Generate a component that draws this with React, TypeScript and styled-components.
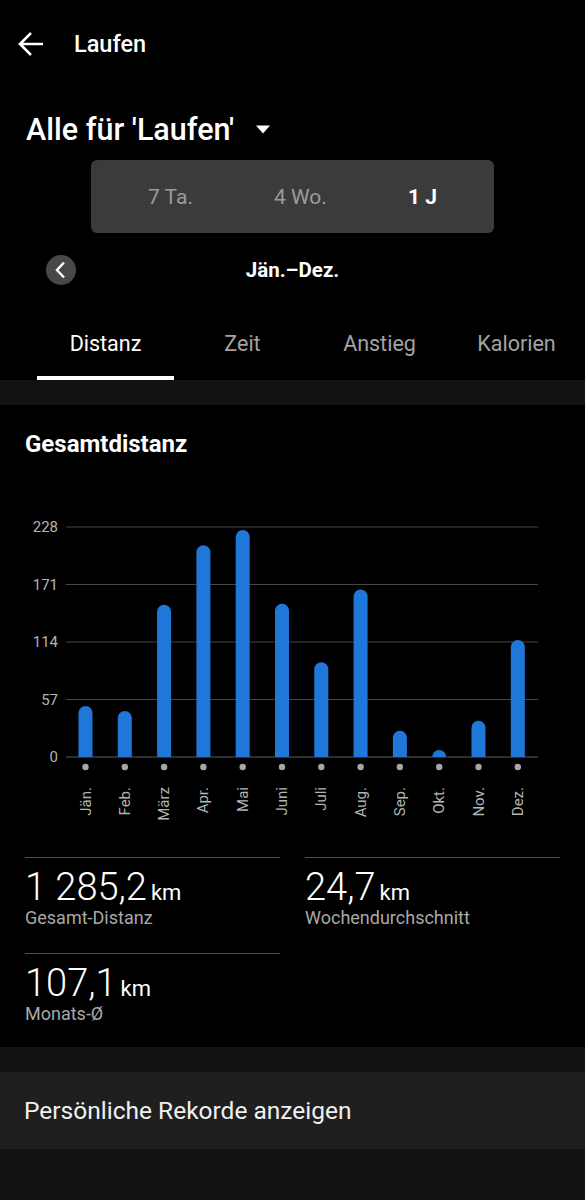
import styled, { createGlobalStyle } from "styled-components";

const GlobalStyle = createGlobalStyle`
  body {
    margin: 0;
    background: #121212;
    font-family: Roboto, "Noto Sans", "Liberation Sans", sans-serif;
    color: white;
  }
`;

const Page = styled.div`
  width: 585px;
  min-height: 100vh;
  display: flex;
  flex-direction: column;
  background: #121212;
`;
const Top = styled.div`
  background: #000;
  display: flex;
  flex-direction: column;
`;
const Header = styled.div`
  height: 88px;
  display: flex;
  align-items: center;
  padding-left: 18px;
  gap: 30px;
`;
const HeaderTitle = styled.div`
  font-size: 23.5px;
  font-weight: 500;
`;
const TitleRow = styled.div`
  display: flex;
  align-items: center;
  gap: 21px;
  padding: 24px 26px 0;
  height: 34px;
`;
const BigTitle = styled.div`
  font-size: 30.5px;
  font-weight: 500;
`;
const Segmented = styled.div`
  margin: 14px 0 0 91px;
  width: 403px;
  height: 73px;
  box-sizing: border-box;
  background: #3b3b3b;
  border-radius: 6px;
  display: flex;
  align-items: center;
  justify-content: space-between;
  padding: 0 57px;
`;
const Segment = styled.div<{ $active?: boolean }>`
  font-size: 21px;
  font-weight: ${(p) => (p.$active ? 700 : 400)};
  color: ${(p) => (p.$active ? "#fff" : "#9c9c9c")};
`;
const PeriodRow = styled.div`
  margin-top: 22px;
  height: 30px;
  display: grid;
  grid-template-columns: 1fr auto 1fr;
  align-items: center;
  padding: 0 46px;
`;
const RoundBtn = styled.div`
  width: 30px;
  height: 30px;
  border-radius: 50%;
  background: #484848;
  display: flex;
  align-items: center;
  justify-content: center;
`;
const PeriodLabel = styled.div`
  font-size: 20.5px;
  font-weight: 700;
`;
const Tabs = styled.div`
  display: flex;
  padding-left: 37px;
`;
const Tab = styled.div<{ $active?: boolean }>`
  width: 137px;
  height: 95px;
  box-sizing: border-box;
  display: flex;
  align-items: flex-end;
  justify-content: center;
  padding-bottom: 20px;
  line-height: 24px;
  font-size: 21.5px;
  color: ${(p) => (p.$active ? "#fff" : "#a3a3a3")};
  border-bottom: 4px solid ${(p) => (p.$active ? "#fff" : "transparent")};
`;
const Band = styled.div`
  height: 25px;
  background: #121212;
`;
const Card = styled.div`
  background: #000;
  padding: 27px 0 23px;
`;
const CardTitle = styled.div`
  padding-left: 25px;
  font-size: 24px;
  font-weight: 700;
  line-height: 24px;
`;
const Chart = styled.svg`
  display: block;
  margin-top: 24px;
`;
const Stats = styled.div`
  margin-top: 27px;
  padding: 0 25px;
  display: grid;
  grid-template-columns: 1fr 1fr;
  column-gap: 25px;
  row-gap: 25px;
`;
const Stat = styled.div`
  border-top: 1px solid #4d4d4d;
  padding-top: 8px;
`;
const StatValue = styled.div`
  font-size: 38px;
  font-weight: 300;
  line-height: 42px;
  height: 42px;
  white-space: nowrap;
`;
const Unit = styled.span`
  font-size: 22px;
  font-weight: 400;
  margin-left: 4px;
`;
const StatLabel = styled.div`
  font-size: 18px;
  line-height: 20px;
  color: #a8a8a8;
`;
const LinkRow = styled.div`
  height: 77px;
  background: #1f1f1f;
  display: flex;
  align-items: center;
  padding-left: 24px;
  font-size: 24.5px;
  color: #f0f0f0;
`;

const months = [
  ["Jän.", 50.5],
  ["Feb.", 45.6],
  ["März", 151],
  ["Apr.", 210],
  ["Mai", 225],
  ["Juni", 152],
  ["Juli", 94],
  ["Aug.", 166],
  ["Sep.", 26],
  ["Okt.", 7],
  ["Nov.", 36],
  ["Dez.", 116],
] as const;

const BASE = 757;
const SCALE = 57.5 / 57;

function bar(x: number, v: number) {
  const h = v * SCALE;
  const r = Math.min(7, h);
  const top = BASE - h;
  return `M${x - 7} ${BASE} V${top + r} A7 ${r} 0 0 1 ${x + 7} ${top + r} V${BASE} Z`;
}

function App() {
  return (
    <Page>
      <GlobalStyle />
      <Top>
        <Header>
          <svg width="26" height="26" viewBox="0 0 26 26">
            <path
              d="M25 13H3M13 2L2 13l11 11"
              stroke="white"
              strokeWidth="2.6"
              fill="none"
            />
          </svg>
          <HeaderTitle>Laufen</HeaderTitle>
        </Header>
        <TitleRow>
          <BigTitle>Alle für 'Laufen'</BigTitle>
          <svg width="16" height="9" viewBox="0 0 16 9">
            <polygon points="1,0.5 15,0.5 8,8.5" fill="white" />
          </svg>
        </TitleRow>
        <Segmented>
          <Segment>7 Ta.</Segment>
          <Segment>4 Wo.</Segment>
          <Segment $active>1 J</Segment>
        </Segmented>
        <PeriodRow>
          <RoundBtn>
            <svg width="14" height="18" viewBox="0 0 14 18">
              <path d="M10 1.5L3 9l7 7.5" stroke="white" strokeWidth="2.4" fill="none" />
            </svg>
          </RoundBtn>
          <PeriodLabel>Jän.–Dez.</PeriodLabel>
          <div />
        </PeriodRow>
        <Tabs>
          <Tab $active>Distanz</Tab>
          <Tab>Zeit</Tab>
          <Tab>Anstieg</Tab>
          <Tab>Kalorien</Tab>
        </Tabs>
      </Top>
      <Band />
      <Card>
        <CardTitle>Gesamtdistanz</CardTitle>
        <Chart width="585" height="350" viewBox="0 480 585 350">
          {[0, 57, 114, 171, 228].map((v, i) => {
            const y = BASE - i * 57.5;
            return (
              <g key={v}>
                <line x1="66" x2="538" y1={y} y2={y} stroke={v === 0 ? "#5a5a5a" : "#474747"} strokeWidth="1.2" />
                <text
                  x="58"
                  y={y}
                  textAnchor="end"
                  dominantBaseline="central"
                  fill="#b4b4b4"
                  fontSize="15"
                  fontFamily="Roboto, sans-serif"
                >
                  {v}
                </text>
              </g>
            );
          })}
          {months.map(([m, v], i) => {
            const x = 85.5 + i * 39.3;
            return (
              <g key={m}>
                <path d={bar(x, v)} fill="#1f78d8" />
                <circle cx={x} cy="767" r="3.2" fill="#a6a6a6" />
                <text
                  x={x}
                  y="787"
                  transform={`rotate(-90 ${x} 787)`}
                  textAnchor="end"
                  dominantBaseline="central"
                  fill="#b4b4b4"
                  fontSize="15"
                  fontFamily="Roboto, sans-serif"
                >
                  {m}
                </text>
              </g>
            );
          })}
        </Chart>
        <Stats>
          <Stat>
            <StatValue>
              1 285,2<Unit>km</Unit>
            </StatValue>
            <StatLabel>Gesamt-Distanz</StatLabel>
          </Stat>
          <Stat>
            <StatValue>
              24,7<Unit>km</Unit>
            </StatValue>
            <StatLabel>Wochendurchschnitt</StatLabel>
          </Stat>
          <Stat>
            <StatValue>
              107,1<Unit>km</Unit>
            </StatValue>
            <StatLabel>Monats-Ø</StatLabel>
          </Stat>
        </Stats>
      </Card>
      <Band />
      <LinkRow>Persönliche Rekorde anzeigen</LinkRow>
    </Page>
  );
}

export default App;
